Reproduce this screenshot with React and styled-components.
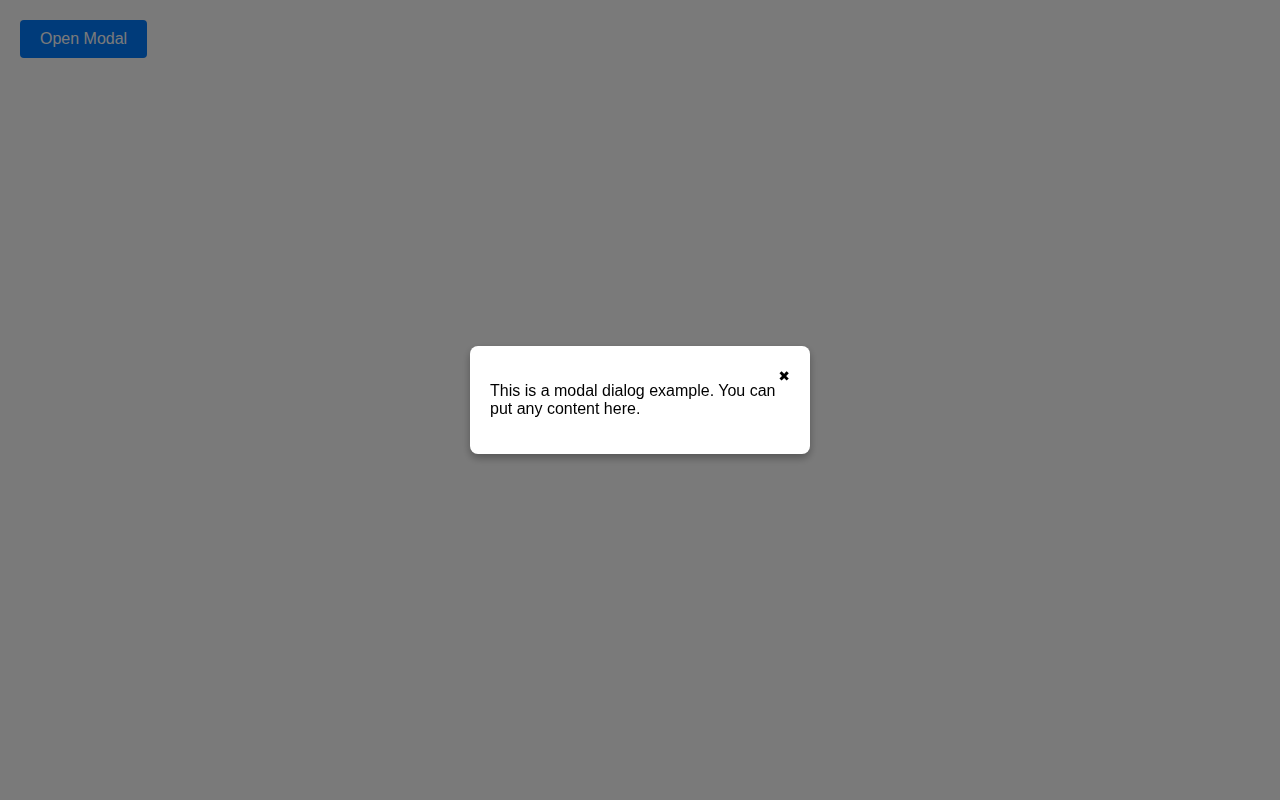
import styled, { createGlobalStyle } from 'styled-components';

const GlobalStyle = createGlobalStyle`
  body {
    margin: 0;
    font-family: "Liberation Sans", Arial, sans-serif;
    background: #fff;
  }
`;

const Page = styled.div`
  padding: 20px;
`;

const OpenButton = styled.button`
  padding: 10px 20px;
  background: #007bff;
  color: #fff;
  border: none;
  border-radius: 4px;
  font-family: "Liberation Sans", Arial, sans-serif;
  font-size: 16px;
  line-height: 18px;
  cursor: pointer;
`;

const Overlay = styled.div`
  position: fixed;
  inset: 0;
  background: rgba(0, 0, 0, 0.52);
  display: flex;
  align-items: center;
  justify-content: center;
`;

const ModalBox = styled.div`
  position: relative;
  width: 300px;
  padding: 20px;
  background: #fff;
  border-radius: 8px;
  box-shadow: 0 4px 8px rgba(0, 0, 0, 0.3);
`;

const CloseButton = styled.button`
  position: absolute;
  top: 18px;
  right: 14px;
  padding: 4px 6px;
  background: none;
  border: none;
  font-size: 14px;
  line-height: 16px;
  color: #000;
  cursor: pointer;
  font-family: "DejaVu Sans", sans-serif;
`;

const Text = styled.p`
  margin: 16px 0;
  font-size: 16px;
  line-height: 18px;
  color: #000;
`;

export default function App() {
  return (
    <>
      <GlobalStyle />
      <Page>
        <OpenButton>Open Modal</OpenButton>
      </Page>
      <Overlay>
        <ModalBox>
          <CloseButton aria-label="Close">✖</CloseButton>
          <Text>This is a modal dialog example. You can put any content here.</Text>
        </ModalBox>
      </Overlay>
    </>
  );
}
